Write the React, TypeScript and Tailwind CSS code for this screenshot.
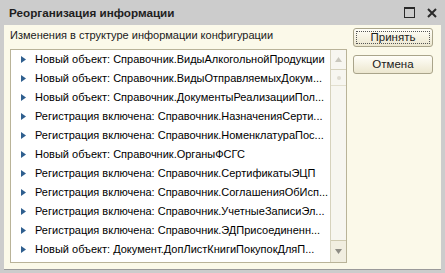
import React from 'react';

const rows = [
  'Новый объект: Справочник.ВидыАлкогольнойПродукции',
  'Новый объект: Справочник.ВидыОтправляемыхДокум...',
  'Новый объект: Справочник.ДокументыРеализацииПол...',
  'Регистрация включена: Справочник.НазначенияСерти...',
  'Регистрация включена: Справочник.НоменклатураПос...',
  'Новый объект: Справочник.ОрганыФСГС',
  'Регистрация включена: Справочник.СертификатыЭЦП',
  'Регистрация включена: Справочник.СоглашенияОбИсп...',
  'Регистрация включена: Справочник.УчетныеЗаписиЭл...',
  'Регистрация включена: Справочник.ЭДПрисоединенн...',
  'Новый объект: Документ.ДопЛистКнигиПокупокДляП...',
];

function Bullet() {
  return (
    <svg width="5" height="7" viewBox="0 0 5 7" className="shrink-0">
      <path d="M0 0 L5 3.5 L0 7 Z" fill="#2f5f8f" />
    </svg>
  );
}

function Button({ label, focused }: { label: string; focused?: boolean }) {
  return (
    <div className="relative h-[19px] rounded-[3px] border border-[#a9a48a] bg-gradient-to-b from-[#fffef8] to-[#ece7cf] flex items-center justify-center text-[11.5px] text-[#1a1a1a]">
      {focused && (
        <div className="absolute inset-[2px] border border-dotted border-[#555]" />
      )}
      <span className="relative leading-none">{label}</span>
    </div>
  );
}

export default function App() {
  return (
    <div
      className="w-[445px] h-[273px] bg-[#cccccc] flex flex-col overflow-hidden"
      style={{ fontFamily: '"Liberation Sans", Arial, sans-serif' }}
    >
      {/* Title bar */}
      <div className="h-[25px] flex items-center pl-[9px] pr-[8px]">
        <span className="text-[11.7px] font-bold text-[#1e1e1e]">Реорганизация информации</span>
        <div className="ml-auto flex items-center gap-[12px]">
          <svg width="11" height="11" viewBox="0 0 11 11">
            <rect x="0.5" y="0.5" width="10" height="10" fill="none" stroke="#2a2a2a" />
            <rect x="0" y="0" width="11" height="2" fill="#2a2a2a" />
          </svg>
          <svg width="10" height="10" viewBox="0 0 10 10">
            <path d="M1 1 L9 9 M9 1 L1 9" stroke="#2a2a2a" strokeWidth="2" />
          </svg>
        </div>
      </div>

      {/* Body */}
      <div className="mx-[4px] h-[245px] bg-[#fbf9e9] border-b border-[#9a9a9a] flex px-[6px] pt-[3px]">
        <div className="flex flex-col">
          <div className="h-[21px] leading-[15px] text-[11px] text-[#1a1a1a]">
            Изменения в структуре информации конфигурации
          </div>
          <div className="w-[337px] h-[214px] border border-[#b9b398] bg-white flex">
            <div className="flex-1 min-w-0 flex flex-col">
              {rows.map((r, i) => (
                <div key={i} className="h-[19px] flex items-center pl-[10px] gap-[9px]">
                  <Bullet />
                  <span className="whitespace-nowrap text-[11px] text-black">{r}</span>
                </div>
              ))}
            </div>
            {/* Scrollbar */}
            <div className="w-[16px] border-l border-[#d6d2bd] bg-[#f7f6f0] flex flex-col">
              <div className="h-[20px] border-b border-[#d6d2bd] flex items-center justify-center">
                <svg width="7" height="5" viewBox="0 0 7 5">
                  <path d="M3.5 0 L7 5 L0 5 Z" fill="#c9c7bd" />
                </svg>
              </div>
              <div className="h-[16px] border-b border-[#e2dfcf] flex items-center justify-center">
                <div className="w-[4px] h-[4px] rounded-full bg-[#dedbd0]" />
              </div>
              <div className="flex-1" />
              <div className="h-[22px] border-t border-[#cfcab0] bg-[#f1eee0] flex items-center justify-center">
                <svg width="7" height="5" viewBox="0 0 7 5">
                  <path d="M0 0 L7 0 L3.5 5 Z" fill="#8e8c84" />
                </svg>
              </div>
            </div>
          </div>
        </div>
        <div className="w-[80px] ml-[6px] flex flex-col gap-[8px]">
          <Button label="Принять" focused />
          <Button label="Отмена" />
        </div>
      </div>
    </div>
  );
}
